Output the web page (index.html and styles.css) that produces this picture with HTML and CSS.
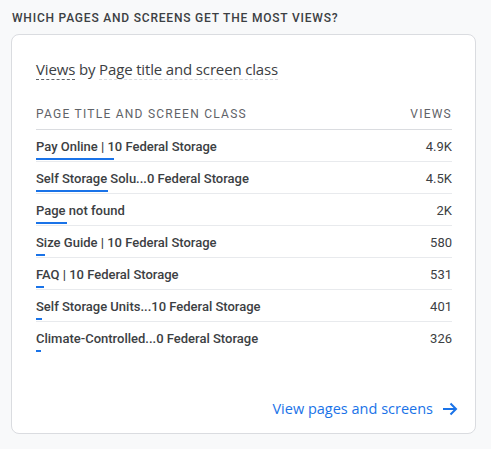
FILE: index.html
```html
<!DOCTYPE html>
<html>
<head>
<meta charset="utf-8">
<link rel="stylesheet" href="styles.css">
</head>
<body>
<div class="section">
  <h2 class="heading">WHICH PAGES AND SCREENS GET THE MOST VIEWS?</h2>
  <div class="card">
    <div class="card-title"><span class="metric">Views</span> by <span class="dim">Page title and screen class</span></div>
    <div class="table">
      <div class="thead">
        <span>PAGE TITLE AND SCREEN CLASS</span>
        <span>VIEWS</span>
      </div>
      <div class="row"><div class="name"><span>Pay Online | 10 Federal Storage</span><i class="bar" style="width:78px"></i></div><span class="val">4.9K</span></div>
      <div class="row"><div class="name"><span>Self Storage Solu...0 Federal Storage</span><i class="bar" style="width:72px"></i></div><span class="val">4.5K</span></div>
      <div class="row"><div class="name"><span>Page not found</span><i class="bar" style="width:31px"></i></div><span class="val">2K</span></div>
      <div class="row"><div class="name"><span>Size Guide | 10 Federal Storage</span><i class="bar" style="width:9px"></i></div><span class="val">580</span></div>
      <div class="row"><div class="name"><span>FAQ | 10 Federal Storage</span><i class="bar" style="width:8px"></i></div><span class="val">531</span></div>
      <div class="row"><div class="name"><span>Self Storage Units...10 Federal Storage</span><i class="bar" style="width:6px"></i></div><span class="val">401</span></div>
      <div class="row last"><div class="name"><span>Climate-Controlled...0 Federal Storage</span><i class="bar" style="width:5px"></i></div><span class="val">326</span></div>
    </div>
    <a class="link" href="#">View pages and screens
      <svg width="16" height="16" viewBox="0 0 16 16"><path d="M1 8h13M8.5 2.5L14 8l-5.5 5.5" fill="none" stroke="#1a73e8" stroke-width="2"/></svg>
    </a>
  </div>
</div>
</body>
</html>
```

FILE: styles.css
```css
* { box-sizing: border-box; }
body {
  margin: 0;
  background: #f8f9fa;
  font-family: Roboto, "Liberation Sans", sans-serif;
  color: #3c4043;
}
.section {
  padding: 11px 15px 15px 11px;
}
.heading {
  margin: 0 0 0 1px;
  font-size: 12px;
  line-height: 14px;
  font-weight: 500;
  letter-spacing: 0.8px;
  color: #3c4043;
}
.card {
  margin-top: 9px;
  width: 465px;
  height: 400px;
  background: #fff;
  border: 1px solid #dadce0;
  border-radius: 8px;
  padding: 24px 23px 14px 24px;
  display: flex;
  flex-direction: column;
}
.card-title {
  font-family: "Open Sans", Roboto, sans-serif;
  font-size: 15px;
  line-height: 20px;
  letter-spacing: -0.15px;
  color: #3c4043;
}
.metric {
  border-bottom: 1px dashed #5f6368;
}
.dim {
  border-bottom: 1px dashed #dadce0;
}
.table {
  margin-top: 28px;
}
.thead {
  display: flex;
  justify-content: space-between;
  font-size: 12px;
  line-height: 14px;
  letter-spacing: 1.25px;
  color: #5f6368;
  padding-bottom: 8px;
  border-bottom: 1px solid #dadce0;
}
.row {
  display: flex;
  justify-content: space-between;
  align-items: flex-start;
  padding-top: 8px;
  padding-bottom: 1px;
  border-bottom: 1px solid #e8eaed;
  font-size: 13px;
  line-height: 17px;
  color: #3c4043;
}
.row.last { border-bottom: none; }
.name {
  display: flex;
  flex-direction: column;
  align-items: flex-start;
  font-weight: 500;
}
.bar {
  display: block;
  height: 2px;
  margin-top: 3px;
  background: #1a73e8;
}
.val {
  font-weight: 400;
}
.link {
  margin-top: auto;
  align-self: flex-end;
  display: flex;
  align-items: center;
  gap: 9px;
  margin-right: -6px;
  color: #1a73e8;
  text-decoration: none;
  font-family: "Open Sans", Roboto, sans-serif;
  font-size: 14.5px;
  line-height: 20px;
  font-weight: 500;
}
.link svg { display: block; }
```
